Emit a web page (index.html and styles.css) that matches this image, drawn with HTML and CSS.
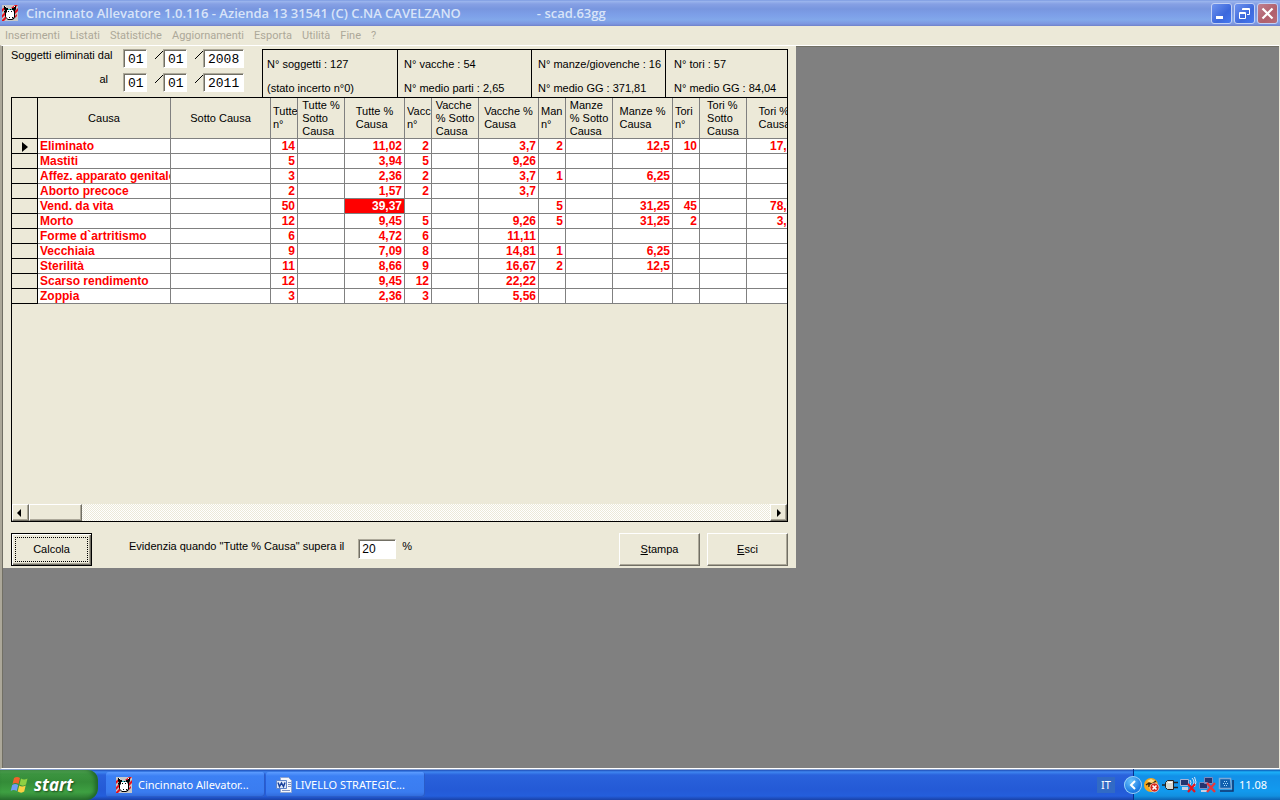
FILE: index.html
```html
<!DOCTYPE html>
<html lang="it">
<head>
<meta charset="utf-8">
<title>Cincinnato Allevatore</title>
<link rel="stylesheet" href="styles.css">
</head>
<body>
<svg class="defs" width="0" height="0" aria-hidden="true">
  <symbol id="cow" viewBox="0 0 16 16">
    <path fill="#c8c8c8" d="M0 0h16v16H0z"/>
    <path fill="#e8101c" d="M0 4l4-3v2L0 7zM9 3l4-3h3l-4 4zM13 6l3-3v3l-3 3zM0 10l4-4v3l-4 4zM0 15l4-4v3l-2 2H0zM13 11l2-2v2l-2 2z"/>
    <path fill="#000" d="M2 1h2v2h2v1h4V3h2V1h2v3l-1 2v6l-1 2-2 1H6l-2-2-1-2V8L2 7V6h1L2 4z"/>
    <path fill="#fff" d="M5 5h6l1 2v5l-2 2H6l-2-2V8l1-1zM3 1h1v1H3zM12 1h1v1h-1z"/>
    <path fill="#000" d="M6 6h1v1H6zM9 6h1v1H9zM7 12h1v1H7zM10 12h1v1h-1z"/>
    <path fill="#18b8c0" d="M6 4h2v1H6zM9 4h1v1H9z"/>
  </symbol>
</svg>
<div class="desktop">
  <header class="titlebar">
    <svg class="icon16" aria-hidden="true"><use href="#cow"/></svg>
    <h1 class="title"><span>Cincinnato Allevatore 1.0.116 - Azienda 13 31541 (C) C.NA CAVELZANO</span><span>- scad.63gg</span></h1>
    <div class="winbtns">
      <button class="winbtn" aria-label="Riduci a icona"><svg width="19" height="19"><path fill="#fff" d="M4 12h7v3H4z"/></svg></button>
      <button class="winbtn" aria-label="Ripristina"><svg width="19" height="19"><path fill="none" stroke="#fff" d="M7.500 6V4.500h7v6H12M7 5.500h8M4.500 8.500h6v6h-6zM4 9.500h7"/></svg></button>
      <button class="winbtn winbtn-close" aria-label="Chiudi"><svg width="19" height="19"><path stroke="#fff" stroke-width="2.200" d="M4.500 4.500l10 10M14.500 4.500l-10 10"/></svg></button>
    </div>
  </header>
  <nav class="menubar">
    <button>Inserimenti</button><button>Listati</button><button>Statistiche</button><button>Aggiornamenti</button><button>Esporta</button><button>Utilità</button><button>Fine</button><button>?</button>
  </nav>
  <main class="mdi">
    <form class="form">
      <div class="top">
        <div class="dates">
          <label for="d1">Soggetti eliminati dal</label>
          <span class="date"><input id="d1" class="field mono" value="01"><i class="slash"></i><input class="field mono" value="01" aria-label="Dal mese"><i class="slash"></i><input class="field mono year" value="2008" aria-label="Dal anno"></span>
          <label for="d2">al</label>
          <span class="date"><input id="d2" class="field mono" value="01"><i class="slash"></i><input class="field mono" value="01" aria-label="Al mese"><i class="slash"></i><input class="field mono year" value="2011" aria-label="Al anno"></span>
        </div>
        <div class="stats">
          <div><p>N° soggetti : 127</p><p>(stato incerto n°0)</p></div>
          <div><p>N° vacche : 54</p><p>N° medio parti : 2,65</p></div>
          <div><p>N° manze/giovenche : 16</p><p>N° medio GG : 371,81</p></div>
          <div><p>N° tori : 57</p><p>N° medio GG : 84,04</p></div>
        </div>
      </div>
      <div class="grid">
        <div class="gridview">
        <table>
          <colgroup><col class="c-row"><col class="c-causa"><col class="c-sotto"><col class="c-n"><col class="c-s"><col class="c-p"><col class="c-n"><col class="c-s"><col class="c-p"><col class="c-n"><col class="c-s"><col class="c-p"><col class="c-n"><col class="c-s"><col class="c-last"></colgroup>
          <thead><tr>
            <th></th><th><span>Causa</span></th><th><span>Sotto Causa</span></th>
            <th class="n"><span>Tutte<br>n°</span></th><th><span>Tutte %<br>Sotto<br>Causa</span></th><th><span>Tutte %<br>Causa</span></th>
            <th class="n"><span>Vacc<br>n°</span></th><th><span>Vacche<br>% Sotto<br>Causa</span></th><th><span>Vacche %<br>Causa</span></th>
            <th class="n"><span>Man<br>n°</span></th><th><span>Manze<br>% Sotto<br>Causa</span></th><th><span>Manze %<br>Causa</span></th>
            <th class="n"><span>Tori<br>n°</span></th><th><span>Tori %<br>Sotto<br>Causa</span></th><th><span>Tori %<br>Causa</span></th>
          </tr></thead>
          <tbody>
            <tr><th><svg class="marker" width="6" height="10"><path d="M0 0l6 5-6 5z"/></svg></th><td>Eliminato</td><td></td><td>14</td><td></td><td>11,02</td><td>2</td><td></td><td>3,7</td><td>2</td><td></td><td>12,5</td><td>10</td><td></td><td>17,54</td></tr>
            <tr><th></th><td>Mastiti</td><td></td><td>5</td><td></td><td>3,94</td><td>5</td><td></td><td>9,26</td><td></td><td></td><td></td><td></td><td></td><td></td></tr>
            <tr><th></th><td>Affez. apparato genitale</td><td></td><td>3</td><td></td><td>2,36</td><td>2</td><td></td><td>3,7</td><td>1</td><td></td><td>6,25</td><td></td><td></td><td></td></tr>
            <tr><th></th><td>Aborto precoce</td><td></td><td>2</td><td></td><td>1,57</td><td>2</td><td></td><td>3,7</td><td></td><td></td><td></td><td></td><td></td><td></td></tr>
            <tr><th></th><td>Vend. da vita</td><td></td><td>50</td><td></td><td class="hot">39,37</td><td></td><td></td><td></td><td>5</td><td></td><td>31,25</td><td>45</td><td></td><td>78,95</td></tr>
            <tr><th></th><td>Morto</td><td></td><td>12</td><td></td><td>9,45</td><td>5</td><td></td><td>9,26</td><td>5</td><td></td><td>31,25</td><td>2</td><td></td><td>3,51</td></tr>
            <tr><th></th><td>Forme d`artritismo</td><td></td><td>6</td><td></td><td>4,72</td><td>6</td><td></td><td>11,11</td><td></td><td></td><td></td><td></td><td></td><td></td></tr>
            <tr><th></th><td>Vecchiaia</td><td></td><td>9</td><td></td><td>7,09</td><td>8</td><td></td><td>14,81</td><td>1</td><td></td><td>6,25</td><td></td><td></td><td></td></tr>
            <tr><th></th><td>Sterilità</td><td></td><td>11</td><td></td><td>8,66</td><td>9</td><td></td><td>16,67</td><td>2</td><td></td><td>12,5</td><td></td><td></td><td></td></tr>
            <tr><th></th><td>Scarso rendimento</td><td></td><td>12</td><td></td><td>9,45</td><td>12</td><td></td><td>22,22</td><td></td><td></td><td></td><td></td><td></td><td></td></tr>
            <tr><th></th><td>Zoppia</td><td></td><td>3</td><td></td><td>2,36</td><td>3</td><td></td><td>5,56</td><td></td><td></td><td></td><td></td><td></td><td></td></tr>
          </tbody>
        </table>
        </div>
        <div class="scroll">
          <button type="button" class="raised arrow" aria-label="Scorri a sinistra"><svg width="4" height="8"><path d="M4 0v8L0 4z"/></svg></button>
          <span class="raised thumb"></span>
          <button type="button" class="raised arrow arrow-right" aria-label="Scorri a destra"><svg width="4" height="8"><path d="M0 0v8l4-4z"/></svg></button>
        </div>
      </div>
      <div class="actions">
        <button type="button" class="raised btn default"><span>Calcola</span></button>
        <label for="soglia">Evidenzia quando "Tutte % Causa" supera il</label>
        <input id="soglia" class="field limit" value="20">
        <span class="pct">%</span>
        <button type="button" class="raised btn push"><span><u>S</u>tampa</span></button>
        <button type="button" class="raised btn"><span><u>E</u>sci</span></button>
      </div>
    </form>
  </main>
  <footer class="taskbar">
    <button class="start">
      <svg width="20" height="20" viewBox="0 0 20 20" aria-hidden="true"><path fill="#f0622c" d="M4 3c2-1.500 4-1.500 6 0L8.500 9c-2-1.400-4-1.400-6 0z"/><path fill="#8fd043" d="M11 3.500c2 1.400 4 1.400 6.500 0L16 9.500c-2 1.500-4 1.500-6.500 0z"/><path fill="#6f9df5" d="M2.200 10c2-1.500 4-1.500 6 0l-1.500 6c-2-1.400-4-1.400-6 0z"/><path fill="#fbd043" d="M9.200 10.500c2 1.400 4 1.400 6.500 0l-1.500 6c-2 1.500-4 1.500-6.500 0z"/></svg>
      <span>start</span>
    </button>
    <div class="tasks">
      <button class="task"><svg class="icon16" aria-hidden="true"><use href="#cow"/></svg><span>Cincinnato Allevator...</span></button>
      <button class="task"><svg class="icon16" viewBox="0 0 16 16" aria-hidden="true"><path fill="#f4f6fb" stroke="#8fa4d0" d="M4.500.5h8l3 3v12h-11z"/><path stroke="#7d92c4" d="M12 5.500h3M12 7.500h3M12 9.500h3M6 13.500h8"/><path fill="#dfe8fa" stroke="#5f84c8" d="M.5 3.500h10v8H.5z"/><path fill="none" stroke="#17409a" stroke-width="1.500" d="M2 5.500l1.500 4 2-3.500 2 3.500L9 5.500"/></svg><span>LIVELLO STRATEGIC...</span></button>
    </div>
    <span class="lang">IT</span>
    <div class="tray">
      <button class="chevron" aria-label="Mostra icone nascoste"><svg width="8" height="10"><path fill="none" stroke="#fff" stroke-width="2" d="M6 1L2 5l4 4"/></svg></button>
      <svg width="16" height="16" aria-hidden="true"><circle cx="7" cy="8" r="7" fill="#f6a81c"/><path fill="#ffe08a" d="M3 4l4-2 4 2-4 2z"/><path fill="none" stroke="#3a2608" stroke-width="1.500" d="M2 8l3-2 3 1 4-3M5 6v4"/><circle cx="10.500" cy="10.500" r="4.500" fill="#d8281c" stroke="#fff" stroke-width=".6"/><path stroke="#fff" stroke-width="1.600" d="M8.500 8.500l4 4M12.500 8.500l-4 4"/></svg>
      <svg width="16" height="16" aria-hidden="true"><path fill="#d8d8d0" stroke="#222" d="M3.500 5.500l2-2h6v9h-6l-2-2z"/><path stroke="#222" stroke-width="1.400" d="M0 8h3M12 5.500h4M12 10.500h4"/><path stroke="#fff" d="M6 5.500h4"/></svg>
      <svg width="17" height="16" aria-hidden="true"><path fill="#26336e" stroke="#a8b4d8" d="M.5 2.500h8v6h-8z"/><path fill="#c8d0e4" d="M2 10h6v3H2z"/><path fill="none" stroke="#dfe6f4" d="M10 3q2 2 0 5M12 1q4 4 0 8M14.500 0q3 5 0 10"/><path stroke="#e8141c" stroke-width="2.200" d="M8 7l7 8M15 7l-7 8"/></svg>
      <svg width="17" height="16" aria-hidden="true"><path fill="#26336e" stroke="#7c8cc0" d="M5.500.5h8v6h-8zM.5 5.500h8v6h-8z"/><path fill="#c8d0e4" d="M2 13h6v2H2z"/><path stroke="#e8383c" stroke-width="2.400" d="M8 6l8 9M16 6l-8 9"/></svg>
      <svg width="16" height="16" aria-hidden="true"><path fill="#0e5fae" stroke="#7fa8d4" stroke-width="1.500" d="M1.500 1.500h11l1 10h-12z"/><path fill="none" stroke="#12346c" stroke-width="1.500" d="M2 14h13V3"/><path fill="#a8dcff" d="M6 4h1v1H6zM8 4h1v1H8zM5 6h1v1H5zM7 6h1v1H7zM9 6h1v1H9zM6 8h1v1H6zM8 8h1v1H8z"/></svg>
      <span class="clock">11.08</span>
    </div>
  </footer>
</div>
</body>
</html>
```
FILE: styles.css
```css
* { box-sizing: border-box; }
body { margin: 0; font: 11px/13px "Liberation Sans", Arial, sans-serif; color: #000; }
button, input { font: inherit; color: inherit; margin: 0; padding: 0; border: 0; background: none; border-radius: 0; }
p, h1 { margin: 0; }
svg { flex: none; display: block; }
.defs { position: absolute; }
.icon16 { width: 16px; height: 16px; }

.desktop { min-height: 100vh; display: flex; flex-direction: column; background: #ece9d8; }

.titlebar { display: flex; align-items: center; height: 26px; padding: 0 2px; gap: 8px;
  background: linear-gradient(#6f8fdc 0, #9db7ee 1px, #86a0e4 4px, #7896df 9px, #7d9fe8 15px, #82a8ea 20px, #7c96e0 24px, #6f80c8 26px); }
.title { flex: 1; display: flex; gap: 76px; font: 600 13px/18px "Open Sans", "Noto Sans", sans-serif; color: #d8e4f8; white-space: nowrap; }
.winbtns { display: flex; gap: 2px; }
.winbtn { width: 21px; height: 21px; border: 1px solid #c3d1f5; border-radius: 3px; background: linear-gradient(135deg, #6f93ee, #3c68dc 60%, #4478f0); }
.winbtn-close { background: linear-gradient(135deg, #c08090, #b0606c 60%, #b86c78); }

.menubar { display: flex; gap: 10px; height: 19px; padding: 0 5px; font: 11px/18px Roboto, "Noto Sans", sans-serif; color: #aca899; }

.mdi { flex: 1; display: flex; align-items: flex-start; background: #808080; border: 1px solid #fff; border-left: 2px solid #aca899; border-right-color: #ece9d8; box-shadow: inset 1px 1px #716f64; padding: 0 0 0 1px; }
.form { width: 793px; height: 522px; display: flex; flex-direction: column; padding: 3px 8px 2px; background: #ece9d8; }

.top { display: flex; justify-content: space-between; height: 48px; }
.dates { display: grid; grid-template-columns: 97px auto; grid-auto-rows: 24px; column-gap: 15px; }
.dates label { justify-self: end; white-space: nowrap; }
.dates label:first-child { justify-self: start; }
.date { display: flex; }
.field { background: #fff; border: 1px solid; border-color: #aca899 #fff #fff #aca899; box-shadow: inset 1px 1px #716f64; }
.mono { width: 24px; height: 19px; padding: 2px 0 0 4px; font: 13px/15px "Liberation Mono", monospace; }
.year { width: 41px; }
.slash { width: 16px; height: 16px; background: linear-gradient(135deg, transparent 44%, #000 44%, #000 56%, transparent 56%) 8px 2px / 8px 8px no-repeat; }
.stats { display: grid; grid-template-columns: 135px 134px 134px 122px; border: solid #000; border-width: 1px 0 0 1px; white-space: nowrap; }
.stats div { display: flex; flex-direction: column; gap: 11px; padding: 8px 0 0 4px; border-right: 1px solid #000; }
.stats div + div { padding-left: 6px; }
.stats div:last-child { padding-left: 8px; }

.grid { flex: 1; display: flex; flex-direction: column; border: 1px solid #000; min-height: 0; }
.gridview { flex: 1; overflow: hidden; }
table { width: 791px; table-layout: fixed; border-collapse: separate; border-spacing: 0; }
.c-row { width: 26px; } .c-causa { width: 133px; } .c-sotto { width: 100px; }
.c-n { width: 27px; } .c-s { width: 47px; } .c-p { width: 60px; } .c-last { width: 56px; }
th, td { padding: 0; overflow: hidden; white-space: nowrap; border: solid #808080; border-width: 0 1px 1px 0; }
thead th { height: 41px; font-weight: 400; }
thead span { display: inline-block; text-align: left; vertical-align: middle; }
th.n { text-align: left; padding-left: 2px; }
th.n span { display: block; overflow: hidden; }
thead th:first-child, tbody th { border-color: #000; }
tbody th { background: #ece9d8; }
.marker { margin: 2px 0 0 10px; }
td { height: 15px; padding: 0 2px; font-size: 12px; line-height: 14px; background: #fff; color: #f00; font-weight: 700; text-align: right; }
td:nth-child(2) { text-align: left; }
td.hot { background: #f00; color: #fff; }

.raised { background: #ece9d8; border: 1px solid; border-color: #fff #716f64 #716f64 #fff; box-shadow: inset -1px -1px #aca899; }
.scroll { display: flex; height: 17px; background: repeating-conic-gradient(#fff 0 25%, #ece9d8 0 50%) 0 0 / 2px 2px; }
.arrow { width: 17px; display: flex; align-items: center; justify-content: center; padding-right: 3px; }
.arrow-right { margin-left: auto; padding-right: 0; }
.thumb { width: 53px; }

.actions { display: flex; align-items: flex-start; padding-top: 11px; white-space: nowrap; }
.btn { width: 81px; height: 33px; }
.btn + .btn { margin-left: 7px; }
.default { outline: 1px solid #000; outline-offset: -1px; border-color: #000; box-shadow: inset 1px 1px #fff, inset -1px -1px #716f64, inset -2px -2px #aca899; padding: 3px; }
.default span { display: grid; place-items: center; height: 25px; border: 1px dotted #000; }
.actions label { margin: 7px 14px 0 37px; }
.limit { width: 38px; height: 20px; margin-top: 6px; padding-left: 3px; font-size: 12px; }
.pct { margin: 7px 0 0 6px; }
.push { margin-left: auto; }

.taskbar { display: flex; height: 31px; color: #fff; font: 11px/16px "Noto Sans", "Open Sans", sans-serif;
  background: linear-gradient(#f4f4e4 0, #1f4fb8 1px, #3f86f0 3px, #2a62dc 6px, #245ad6 20px, #245edc 27px, #1a42a8 31px); }
.start { display: flex; align-items: center; gap: 4px; width: 98px; margin-top: 1px; padding-left: 10px; border-radius: 0 10px 12px 0; background: linear-gradient(#5cae5c 0, #3c9440 4px, #348c38 12px, #3ea042 22px, #2c7430 30px); box-shadow: inset -3px 0 4px #1f6428; font: italic 700 17px/20px "Open Sans", sans-serif; text-shadow: 1px 1px 2px #1a4a1c; }
.tasks { flex: 1; display: flex; padding: 3px 0 3px 8px; gap: 1px; }
.task { display: flex; align-items: center; gap: 6px; width: 159px; padding-left: 10px; border-radius: 3px; background: linear-gradient(#5c9cff 0, #3c80f4 4px, #3a7cf0 20px, #2f68d8 25px); box-shadow: inset -1px -1px #2a5cc8; white-space: nowrap; }
.task + .task { gap: 3px; }
.lang { align-self: center; background: #316ac5; padding: 0 4px; margin-right: 18px; }
.tray { display: flex; align-items: center; gap: 2px; padding-right: 13px; border-left: 1px solid #092e8c; background: linear-gradient(#f4f4e4 0, #0c5cb8 1px, #1cb0f8 3px, #1290e8 7px, #129aee 22px, #1290e0 27px, #0c64b4 31px); }
.chevron { display: grid; place-items: center; width: 18px; height: 18px; margin-left: -10px; border-radius: 50%; background: radial-gradient(circle at 40% 30%, #6cc4fc, #1c7ce4 60%, #1660c0); box-shadow: 0 0 0 1px #9cd0f8 inset; }
.clock { margin-left: 3px; }
```
